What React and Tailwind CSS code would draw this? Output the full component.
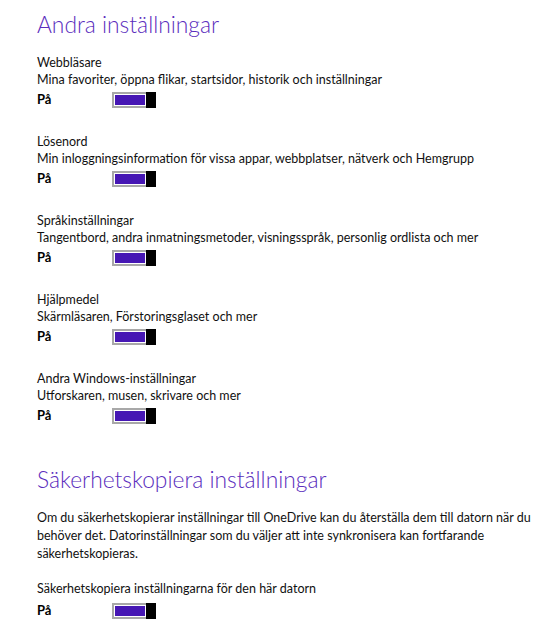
const items = [
  {
    label: "Webbläsare",
    desc: "Mina favoriter, öppna flikar, startsidor, historik och inställningar",
  },
  {
    label: "Lösenord",
    desc: "Min inloggningsinformation för vissa appar, webbplatser, nätverk och Hemgrupp",
  },
  {
    label: "Språkinställningar",
    desc: "Tangentbord, andra inmatningsmetoder, visningsspråk, personlig ordlista och mer",
  },
  {
    label: "Hjälpmedel",
    desc: "Skärmläsaren, Förstoringsglaset och mer",
  },
  {
    label: "Andra Windows-inställningar",
    desc: "Utforskaren, musen, skrivare och mer",
  },
];

const Toggle = () => (
  <div className="w-[44px] h-[16px] border-2 border-[#a8a8a8] flex">
    <div className="flex-1 border border-white bg-[#4617b4]" />
    <div className="w-[10px] -my-[2px] -mr-[2px] bg-black" />
  </div>
);

const OnRow = () => (
  <div className="flex items-center h-[20px]">
    <span className="w-[75px] text-[13px] font-bold text-black">På</span>
    <Toggle />
  </div>
);

export default function App() {
  return (
    <div
      className="w-[560px] h-[643px] bg-white overflow-hidden pl-[37px] text-[12.5px] text-[#111]"
      style={{ fontFamily: 'Lato, "Open Sans", sans-serif' }}
    >
      <h1 className="mt-[8px] h-[32px] leading-[32px] text-[22.8px] font-light text-[#5a2dbd]">
        Andra inställningar
      </h1>

      <div className="mt-[14px] flex flex-col gap-[23px]">
        {items.map((item) => (
          <div key={item.label}>
            <div className="leading-[17px] h-[17px]">{item.label}</div>
            <div className="leading-[17px] h-[17px] whitespace-nowrap">{item.desc}</div>
            <div className="mt-[2px]">
              <OnRow />
            </div>
          </div>
        ))}
      </div>

      <h1 className="mt-[37px] h-[32px] leading-[32px] text-[22.8px] font-light text-[#5a2dbd]">
        Säkerhetskopiera inställningar
      </h1>

      <div className="mt-[14px] leading-[18px] whitespace-nowrap">
        <div>Om du säkerhetskopierar inställningar till OneDrive kan du återställa dem till datorn när du</div>
        <div>behöver det. Datorinställningar som du väljer att inte synkronisera kan fortfarande</div>
        <div>säkerhetskopieras.</div>
      </div>

      <div className="mt-[17px]">
        <div className="leading-[17px] h-[17px]">Säkerhetskopiera inställningarna för den här datorn</div>
        <div className="mt-[4px]">
          <OnRow />
        </div>
      </div>
    </div>
  );
}
